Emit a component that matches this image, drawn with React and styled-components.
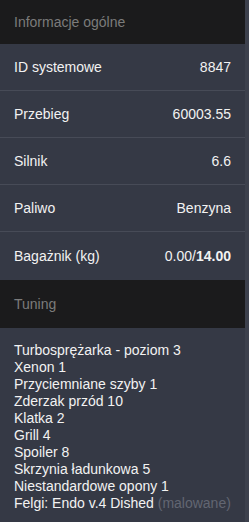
import styled, { createGlobalStyle } from "styled-components";

const Global = createGlobalStyle`
  html, body {
    margin: 0;
    padding: 0;
    background: #363a46;
  }
  body {
    font-family: "Liberation Sans", Arial, sans-serif;
    font-size: 14px;
  }
`;

const Panel = styled.div`
  width: 245px;
  min-height: 522px;
  background: #353945;
  border-right: 4px solid #3d414d;
  color: #f2f2f2;
`;

const SectionTitle = styled.div`
  height: ${props => props.h || 44}px;
  display: flex;
  align-items: center;
  padding: 0 14px;
  background: #1b1b1c;
  color: #7b7b7b;
`;

const Row = styled.div`
  display: flex;
  align-items: center;
  justify-content: space-between;
  padding: 0 14px;
  box-sizing: border-box;
  border-bottom: ${props => (props.last ? "none" : "1px solid #474b57")};
  height: ${props => (props.last ? 48 : 47)}px;
`;

const Label = styled.span``;

const Value = styled.span`
  b {
    font-weight: 700;
  }
`;

const List = styled.div`
  padding: 14px 14px 12px;
  line-height: 17px;
`;

const Muted = styled.span`
  color: #626672;
`;

const rows = [
  ["ID systemowe", "8847"],
  ["Przebieg", "60003.55"],
  ["Silnik", "6.6"],
  ["Paliwo", "Benzyna"],
];

const tuning = [
  "Turbosprężarka - poziom 3",
  "Xenon 1",
  "Przyciemniane szyby 1",
  "Zderzak przód 10",
  "Klatka 2",
  "Grill 4",
  "Spoiler 8",
  "Skrzynia ładunkowa 5",
  "Niestandardowe opony 1",
];

export default () => {
  return (
    <Panel>
      <Global />
      <SectionTitle>Informacje ogólne</SectionTitle>
      {rows.map(([k, v]) => (
        <Row key={k}>
          <Label>{k}</Label>
          <Value>{v}</Value>
        </Row>
      ))}
      <Row last>
        <Label>Bagażnik (kg)</Label>
        <Value>
          0.00/<b>14.00</b>
        </Value>
      </Row>
      <SectionTitle h={48}>Tuning</SectionTitle>
      <List>
        {tuning.map(t => (
          <div key={t}>{t}</div>
        ))}
        <div>
          Felgi: Endo v.4 Dished <Muted>(malowane)</Muted>
        </div>
      </List>
    </Panel>
  );
};
